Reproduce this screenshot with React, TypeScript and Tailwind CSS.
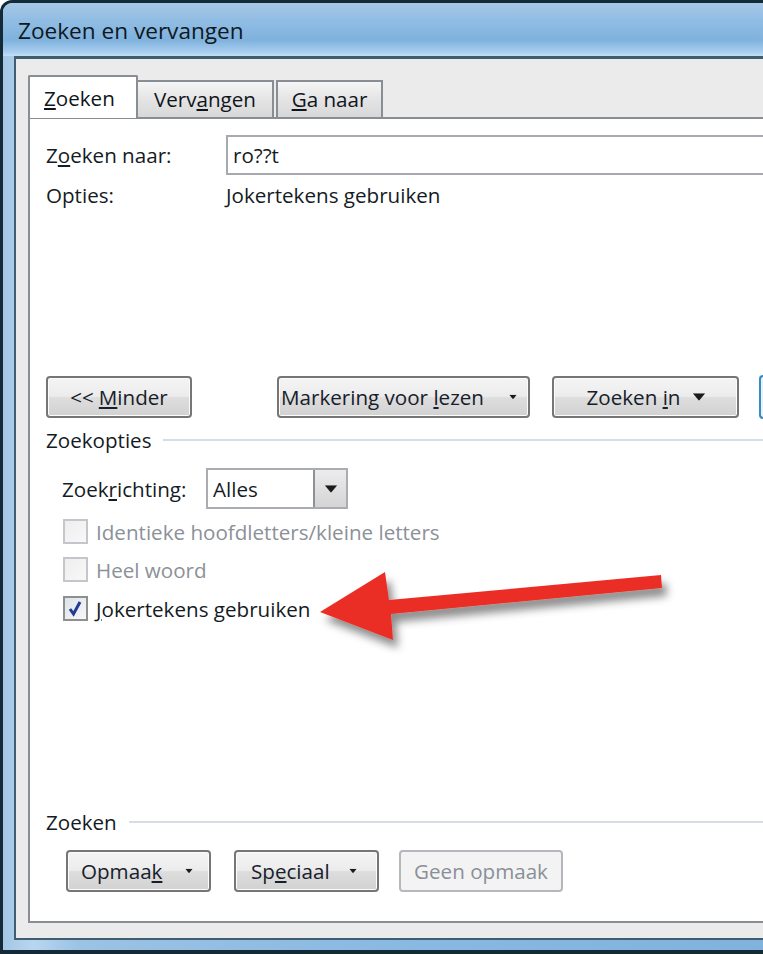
import type { ReactNode } from 'react';

const FONT = { fontFamily: '"Open Sans", "Noto Sans", "DejaVu Sans", sans-serif' };

function Caret({ className = '' }: { className?: string }) {
  return (
    <svg width="10" height="6" viewBox="0 0 10 6" className={className}>
      <path d="M0 0 H10 L5 6 Z" fill="#1b1b1b" />
    </svg>
  );
}

function Btn({
  children,
  width,
  disabled,
  className = '',
}: {
  children: ReactNode;
  width: string;
  disabled?: boolean;
  className?: string;
}) {
  if (disabled) {
    return (
      <div
        className={`${width} shrink-0 h-[42px] flex items-center justify-center rounded-[4px] border-2 border-[#b4b8bc] bg-[#f3f3f3] text-[#8a8f99] ${className}`}
      >
        {children}
      </div>
    );
  }
  return (
    <div
      className={`${width} shrink-0 h-[42px] rounded-[4px] border-2 border-[#767676] bg-[linear-gradient(#f4f4f4_0%,#ececec_48%,#dddddd_52%,#d2d2d2_100%)] shadow-[inset_0_0_0_1px_#fcfcfc] flex items-center text-[#17202a] ${className}`}
    >
      {children}
    </div>
  );
}

function Check({ checked, disabled }: { checked?: boolean; disabled?: boolean }) {
  return (
    <div
      className={`w-[25px] h-[25px] shrink-0 flex items-center justify-center border-2 ${
        disabled ? 'border-[#c3c6ca] bg-[linear-gradient(135deg,#eeeeee,#f8f8f8)]' : 'border-[#8e8f8f] bg-[linear-gradient(135deg,#dfe3e8,#f6f7f8)]'
      }`}
    >
      {checked && (
        <svg width="17" height="17" viewBox="0 0 17 17">
          <path d="M3 9 L6.5 14 L13 2" stroke="#1f3d94" strokeWidth="3" fill="none" />
        </svg>
      )}
    </div>
  );
}

export default function App() {
  return (
    <div className="relative w-[763px] h-[954px] overflow-hidden bg-[#142a36] rounded-tl-[12px] pt-[3px] pl-[3px] pb-[4px] text-[20.6px] leading-[24px]" style={FONT}>
      <div className="h-full flex flex-col rounded-tl-[9px] bg-[linear-gradient(90deg,#a3c7e6_0%,#b8d6ef_4%,#9cc2e4_10%,#8ab9e2_50%,#80b2dd_100%)]">
        {/* title bar */}
        <div className="h-[53px] pl-[15px] flex items-center bg-[linear-gradient(#a6c8e6_0%,#8fbce3_35%,#7fb2de_70%,#a8cdee_92%,#c4e0f6_100%)] rounded-tl-[9px]">
          <span className="text-[22.6px] text-[#0f1820] pt-[2px]">Zoeken en vervangen</span>
        </div>

        {/* body */}
        <div className="flex-1 flex flex-col pl-[11px] pb-[10px]">
          <div className="flex-1 flex flex-col border-l-2 border-t-[3px] border-b-2 border-[#3f5f70] bg-[#ebebeb] pt-[16px] pl-[12px] pb-[15px]">
            {/* tabs */}
            <div className="flex items-end h-[42px] relative z-10">
              <div className="w-[110px] h-[43px] -mb-[1px] bg-white border-2 border-b-0 border-[#898d94] rounded-t-[2px] pl-[14px] pt-[9px] text-[#10151c]">
                <u>Z</u>oeken
              </div>
              <div className="w-[136px] h-[37px] border-2 border-l-0 border-b-0 border-[#898d94] bg-[linear-gradient(#f5f5f5,#e4e4e4_50%,#d8d8d8)] text-center pt-[5px] text-[#10151c]">
                Verv<u>a</u>ngen
              </div>
              <div className="w-[107px] h-[37px] ml-[2px] border-2 border-b-0 border-[#898d94] bg-[linear-gradient(#f5f5f5,#e4e4e4_50%,#d8d8d8)] text-center pt-[5px] text-[#10151c]">
                <u>G</u>a naar
              </div>
            </div>

            {/* tab page */}
            <div className="flex-1 flex flex-col bg-white border-2 border-r-0 border-[#898d94] pl-[16px] text-[#141b24]">
              {/* Zoeken naar */}
              <div className="mt-[16px] flex items-center h-[40px]">
                <span className="w-[180px] shrink-0">Z<u>o</u>eken naar:</span>
                <div className="flex-1 h-[40px] border-2 border-r-0 border-[#a6a9ad] flex items-center pl-[5px]">ro??t</div>
              </div>
              <div className="mt-[8px] flex items-center h-[24px]">
                <span className="w-[180px] shrink-0">Opties:</span>
                <span>Jokertekens gebruiken</span>
              </div>

              {/* button row */}
              <div className="mt-[169px] flex items-center h-[42px]">
                <Btn width="w-[146px]" className="justify-center">
                  &lt;&lt; <u className="ml-[5px]">M</u>inder
                </Btn>
                <Btn width="w-[253px]" className="ml-[85px] pl-[2px] justify-between pr-[10px]">
                  <span>
                    Markering voor <u>l</u>ezen
                  </span>
                  <Caret className="scale-75" />
                </Btn>
                <Btn width="w-[187px]" className="ml-[22px] justify-center gap-[14px]">
                  <span>
                    Zoeken <u>i</u>n
                  </span>
                  <Caret className="scale-125" />
                </Btn>
                <div className="ml-[20px] shrink-0 w-[20px] h-[44px] rounded-l-[4px] border-2 border-r-0 border-[#3b8ac2] bg-[#e6f3fb]" />
              </div>

              {/* Zoekopties */}
              <div className="mt-[10px] flex items-center h-[24px]">
                <span>Zoekopties</span>
                <div className="flex-1 h-[2px] bg-[#d6dde4] ml-[12px]" />
              </div>

              <div className="mt-[16px] flex items-center h-[41px] pl-[16px]">
                <span className="w-[144px] shrink-0">
                  Zoek<u>r</u>ichting:
                </span>
                <div className="w-[142px] h-[41px] border-2 border-[#a9acb0] flex items-center">
                  <span className="flex-1 pl-[5px]">Alles</span>
                  <div className="w-[33px] h-full border-l-2 border-[#8d9095] bg-[linear-gradient(#ececec,#d4d4d4)] flex items-center justify-center">
                    <Caret className="scale-125" />
                  </div>
                </div>
              </div>

              <div className="mt-[10px] flex items-center h-[25px] pl-[17px] gap-[8px] text-[#8c9098]">
                <Check disabled />
                <span>Identieke hoofdletters/kleine letters</span>
              </div>
              <div className="mt-[13px] flex items-center h-[25px] pl-[17px] gap-[8px] text-[#8c9098]">
                <Check disabled />
                <span>Heel woord</span>
              </div>
              <div className="mt-[14px] flex items-center h-[25px] pl-[17px] gap-[8px]">
                <Check checked />
                <span>
                  <u>J</u>okertekens gebruiken
                </span>
              </div>

              {/* Zoeken */}
              <div className="mt-[189px] flex items-center h-[24px]">
                <span>Zoeken</span>
                <div className="flex-1 h-[2px] bg-[#d6dde4] ml-[12px]" />
              </div>

              <div className="mt-[16px] flex items-center h-[42px] pl-[20px]">
                <Btn width="w-[145px]" className="pl-[13px] gap-[22px]">
                  <span>
                    Opmaa<u>k</u>
                  </span>
                  <Caret className="scale-75" />
                </Btn>
                <Btn width="w-[145px]" className="ml-[23px] pl-[15px] gap-[18px]">
                  <span>
                    Sp<u>e</u>ciaal
                  </span>
                  <Caret className="scale-75" />
                </Btn>
                <Btn width="w-[164px]" disabled className="ml-[20px]">
                  Geen opmaak
                </Btn>
              </div>
            </div>
          </div>
        </div>
      </div>

      {/* annotation arrow */}
      <svg className="absolute left-0 top-0 pointer-events-none" width="763" height="954" viewBox="0 0 763 954">
        <defs>
          <filter id="sh" x="-20%" y="-50%" width="140%" height="200%">
            <feDropShadow dx="5" dy="8" stdDeviation="4" floodColor="#000" floodOpacity="0.45" />
          </filter>
        </defs>
        <polygon
          points="320,612 385,572 389,600 661,575 662,588 391,614 393,640"
          fill="#ea2f26"
          filter="url(#sh)"
        />
      </svg>
    </div>
  );
}
